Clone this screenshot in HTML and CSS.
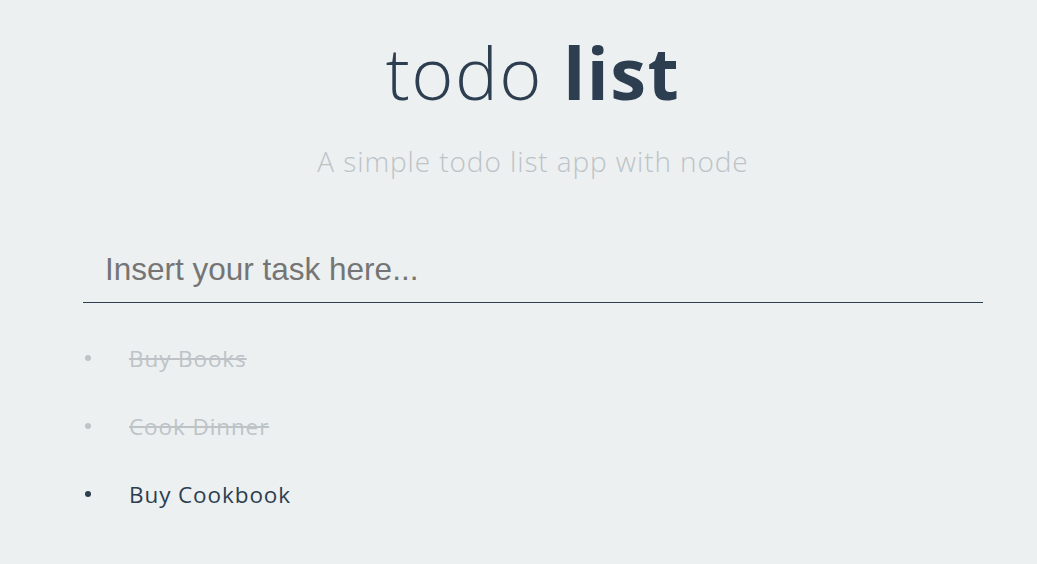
FILE: index.html
```html
<!DOCTYPE html>
<html>
<head>
<meta charset="utf-8">
<link rel="stylesheet" href="styles.css">
</head>
<body>
<div class="container">
  <h1 class="title">todo <strong>list</strong></h1>
  <p class="subtitle">A simple todo list app with node</p>
  <form class="form">
    <input class="task-input" type="text" placeholder="Insert your task here...">
  </form>
  <ul class="todos">
    <li class="todo done"><span class="text">Buy Books</span></li>
    <li class="todo done"><span class="text">Cook Dinner</span></li>
    <li class="todo"><span class="text">Buy Cookbook</span></li>
  </ul>
</div>
</body>
</html>
```
FILE: styles.css
```css
html, body {
  margin: 0;
  padding: 0;
  background: #ecf0f1;
}
body {
  font-family: "Open Sans", "DejaVu Sans", sans-serif;
  color: #2c3e50;
}
.container {
  width: 900px;
  margin-left: 83px;
  padding-top: 27px;
}
.title {
  margin: 0;
  text-align: center;
  font-size: 72px;
  font-weight: 300;
  line-height: 90px;
  letter-spacing: 1.5px;
  color: #2c3e50;
}
.title strong {
  font-weight: 700;
}
.subtitle {
  margin: 27px 0 0;
  text-align: center;
  font-size: 28px;
  font-weight: 300;
  line-height: 34px;
  letter-spacing: 0.9px;
  color: #bdc3c7;
}
.form {
  margin-top: 65px;
}
.task-input {
  display: block;
  width: 100%;
  box-sizing: border-box;
  border: none;
  border-bottom: 1px solid #2c3e50;
  background: transparent;
  font-family: "Liberation Sans", Arial, sans-serif;
  font-size: 31.5px;
  padding: 8px 22px 14px;
  outline: none;
  color: #2c3e50;
}
.task-input::placeholder {
  color: #757575;
}
.todos {
  margin: 21px 0 0;
  padding: 0;
  list-style: none;
}
.todo {
  display: flex;
  align-items: center;
  height: 68px;
  font-size: 22.5px;
  letter-spacing: 0.9px;
  color: #2c3e50;
}
.todo::before {
  content: "";
  width: 6px;
  height: 6px;
  border-radius: 50%;
  background: #2c3e50;
  margin: 0 38px 0 2px;
}
.todo.done {
  color: #bdc3c7;
}
.todo.done::before {
  background: #bdc3c7;
}
.todo.done .text {
  text-decoration: line-through;
}
```
